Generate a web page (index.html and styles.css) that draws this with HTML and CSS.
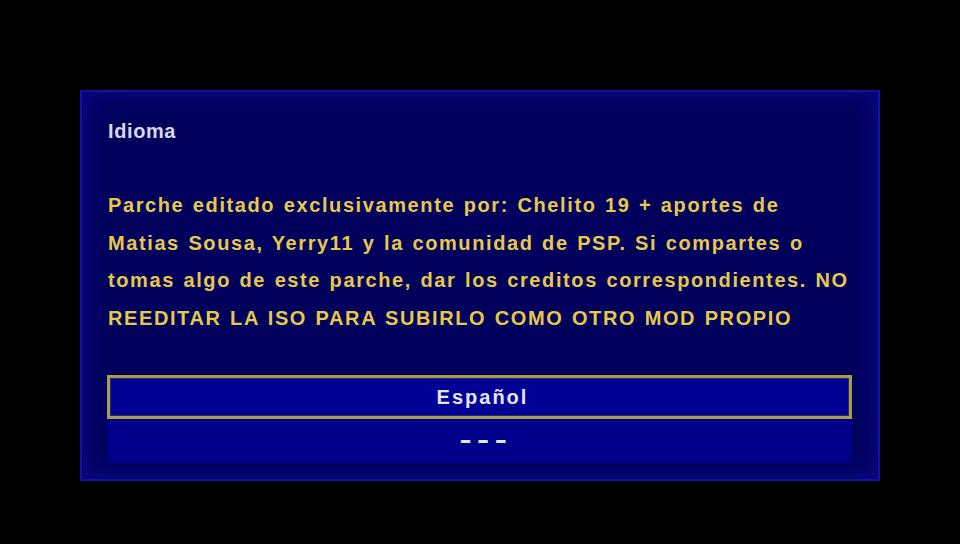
FILE: index.html
```html
<!DOCTYPE html>
<html lang="es">
<head>
<meta charset="utf-8">
<title>Idioma</title>
<link rel="stylesheet" href="styles.css">
</head>
<body>
<div class="screen">
  <div class="panel">
    <div class="title">Idioma</div>
    <p class="desc">Parche editado exclusivamente por: Chelito 19 + aportes de<br>Matias Sousa, Yerry11 y la comunidad de PSP. Si compartes o<br>tomas algo de este parche, dar los creditos correspondientes. NO<br>REEDITAR LA ISO PARA SUBIRLO COMO OTRO MOD PROPIO</p>
    <div class="list">
      <div class="item selected">Español</div>
      <div class="item dashes"><span class="dash-text">---</span></div>
    </div>
  </div>
</div>
</body>
</html>
```
FILE: styles.css
```css
html, body {
  margin: 0;
  padding: 0;
  background: #000;
}
.screen {
  width: 960px;
  height: 544px;
  padding-top: 90px;
  padding-left: 80px;
  box-sizing: border-box;
  font-family: "Liberation Sans", Arial, sans-serif;
  font-weight: bold;
}
.panel {
  width: 800px;
  height: 391px;
  box-sizing: border-box;
  background: #00005c;
  border: 2px solid #1212a6;
  box-shadow: inset 0 0 26px 4px rgba(16, 16, 170, 0.5);
  padding: 29px 26px 0 25px;
}
.title {
  color: #d8d8ec;
  font-size: 20px;
  line-height: 20px;
  letter-spacing: 0.6px;
  padding-left: 1px;
}
.desc {
  margin: 46px 0 0 0;
  padding-left: 1px;
  color: #e6c84a;
  font-size: 20px;
  line-height: 37.7px;
  letter-spacing: 1.6px;
  word-spacing: 1.4px;
  white-space: nowrap;
}
.list {
  margin-top: 37px;
  width: 745px;
  background: #00008a;
}
.item {
  height: 44px;
  line-height: 44px;
  text-align: center;
  color: #e4e4f4;
  font-size: 20px;
  letter-spacing: 2px;
  box-sizing: border-box;
  padding-left: 6px;
}
.item.selected {
  background: #000094;
  border: 3px solid #a89c52;
  box-shadow: inset 0 0 0 1px #2a2a60;
  line-height: 38px;
}
.item.dashes {
  padding-left: 12px;
  line-height: 40px;
}
.dash-text {
  display: inline-block;
  font-size: 26px;
  letter-spacing: 4px;
  transform: scaleX(1.4);
}
```
